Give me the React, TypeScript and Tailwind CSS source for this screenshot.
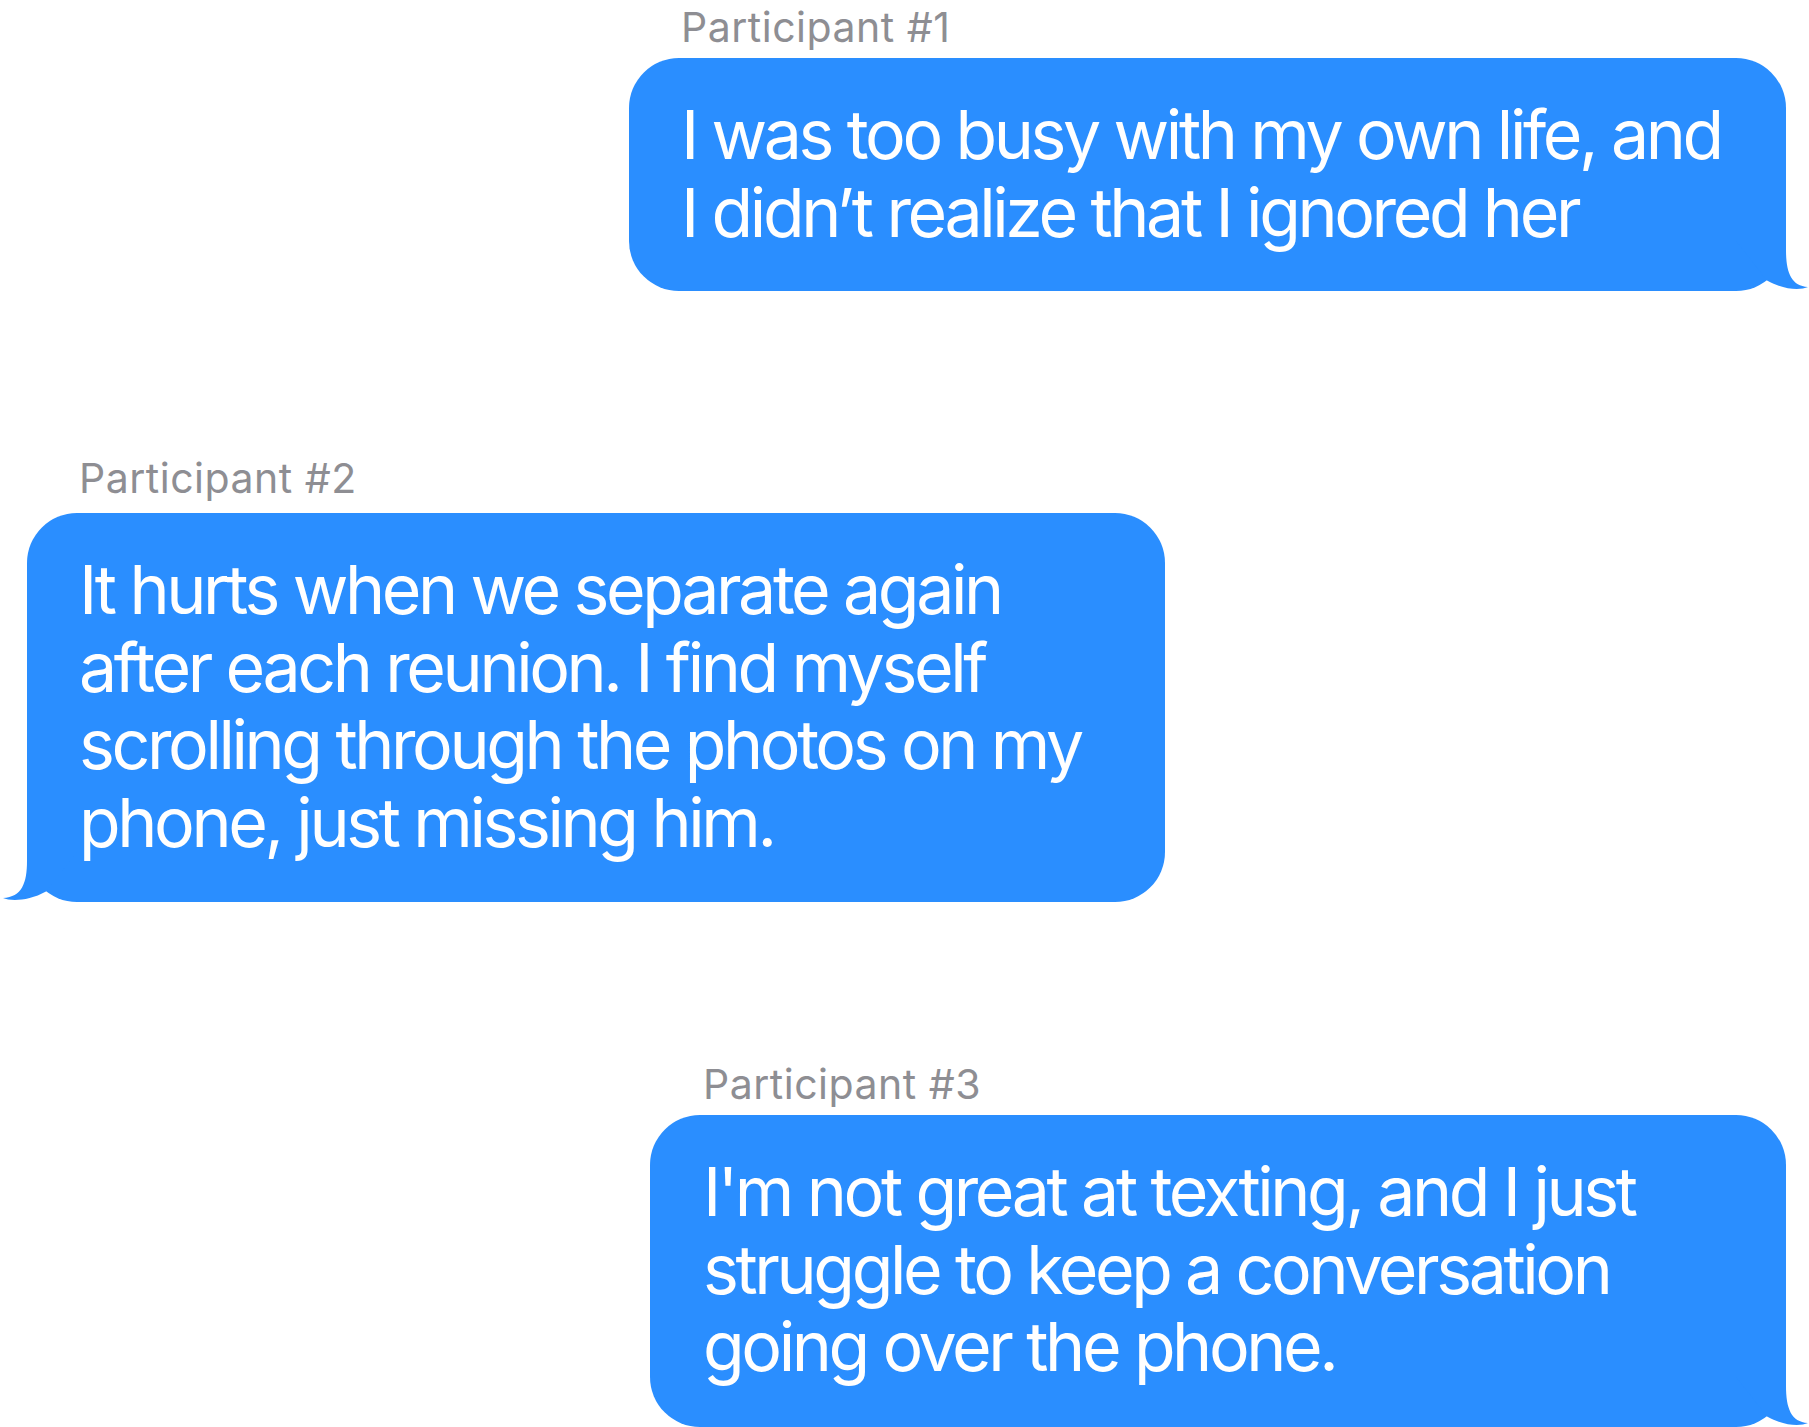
const messages = [
  {
    id: 1,
    label: 'Participant #1',
    side: 'right',
    lines: ['I was too busy with my own life, and', 'I didn’t realize that I ignored her'],
  },
  {
    id: 2,
    label: 'Participant #2',
    side: 'left',
    lines: [
      'It hurts when we separate again',
      'after each reunion. I find myself',
      'scrolling through the photos on my',
      'phone, just missing him.',
    ],
  },
  {
    id: 3,
    label: 'Participant #3',
    side: 'right',
    lines: [
      "I'm not great at texting, and I just",
      'struggle to keep a conversation',
      'going over the phone.',
    ],
  },
]

const Tail = ({ side }: { side: string }) =>
  side === 'right' ? (
    <svg
      className="absolute bottom-0 -right-[22px]"
      width="72"
      height="50"
      viewBox="0 0 72 50"
    >
      <path
        d="M0 0 L50 0 L50 9 C50 31 55 45 72 46 C64 49.5 48 49 31 39.5 Z"
        fill="#2a8eff"
      />
    </svg>
  ) : (
    <svg
      className="absolute bottom-0 -left-[24px]"
      width="74"
      height="50"
      viewBox="0 0 74 50"
    >
      <path
        d="M74 0 L24 0 L24 9 C24 31 19 45 0 46 C8 49.5 26 49 43 39.5 Z"
        fill="#2a8eff"
      />
    </svg>
  )

export default function App() {
  return (
    <div className="w-[1809px] h-[1427px] bg-white overflow-hidden flex flex-col font-['Inter',sans-serif]">
      {/* Participant #1 */}
      <div className="self-end mr-[23px] mt-[3px] w-[1157px]">
        <p className="pl-[52px] text-[41px] leading-[48px] tracking-[0.5px] text-[#8e8e93] mb-[7px]">
          {messages[0].label}
        </p>
        <div className="relative bg-[#2a8eff] rounded-[50px] pl-[52px] pt-[38px] pb-[40px] text-white text-[68px] leading-[77.5px] tracking-[-3.4px]">
          {messages[0].lines.map((line) => (
            <span className="block whitespace-nowrap" key={line}>
              {line}
            </span>
          ))}
          <Tail side="right" />
        </div>
      </div>

      {/* Participant #2 */}
      <div className="self-start ml-[27px] mt-[163px] w-[1138px]">
        <p className="pl-[52px] text-[41px] leading-[48px] tracking-[0.5px] text-[#8e8e93] mb-[11px]">
          {messages[1].label}
        </p>
        <div className="relative bg-[#2a8eff] rounded-[50px] pl-[52px] pt-[38px] pb-[41px] text-white text-[68px] leading-[77.5px] tracking-[-3.4px]">
          {messages[1].lines.map((line) => (
            <span className="block whitespace-nowrap" key={line}>
              {line}
            </span>
          ))}
          <Tail side="left" />
        </div>
      </div>

      {/* Participant #3 */}
      <div className="self-end mr-[23px] mt-[158px] w-[1136px]">
        <p className="pl-[53px] text-[41px] leading-[48px] tracking-[0.5px] text-[#8e8e93] mb-[7px]">
          {messages[2].label}
        </p>
        <div className="relative bg-[#2a8eff] rounded-[50px] pl-[53px] pt-[38px] pb-[41px] text-white text-[68px] leading-[77.5px] tracking-[-3.4px]">
          {messages[2].lines.map((line) => (
            <span className="block whitespace-nowrap" key={line}>
              {line}
            </span>
          ))}
          <Tail side="right" />
        </div>
      </div>
    </div>
  )
}
